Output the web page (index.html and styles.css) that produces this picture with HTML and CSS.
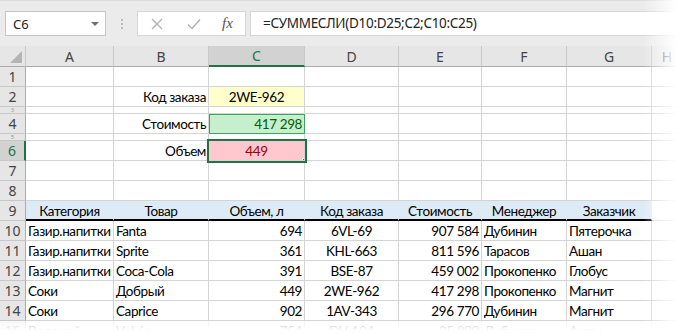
FILE: index.html
```html
<!DOCTYPE html>
<html lang="ru">
<head>
    <meta charset="UTF-8">
    <title>СУММЕСЛИ</title>
    <link rel="stylesheet" href="styles.css">
</head>
<body>

<div class="window">
    <div class="formula-bar">
        <div class="name-box">
            <span>C6</span>
            <span class="arrow"></span>
        </div>
        <div class="grip"><i></i><i></i><i></i></div>
        <div class="fx-buttons">
            <svg class="btn" width="14" height="14" viewBox="0 0 14 14"><path d="M2 2 L12 12 M12 2 L2 12" stroke="#b0b0b0" stroke-width="1.3" fill="none"/></svg>
            <svg class="btn" width="16" height="14" viewBox="0 0 16 14"><path d="M2 7.5 L6 11.5 L14 2.5" stroke="#b0b0b0" stroke-width="1.4" fill="none"/></svg>
            <span class="fx">fx</span>
        </div>
        <div class="formula">=СУММЕСЛИ(D10:D25;C2;C10:C25)</div>
    </div>

    <div class="sheet">
        <div class="row head">
            <div class="corner"><span class="tri"></span></div>
            <div class="ch">A</div>
            <div class="ch">B</div>
            <div class="ch active">C</div>
            <div class="ch">D</div>
            <div class="ch">E</div>
            <div class="ch">F</div>
            <div class="ch">G</div>
            <div class="ch">H</div>
        </div>

        <div class="row">
            <div class="rh">1</div>
            <div class="c"></div><div class="c"></div><div class="c"></div><div class="c"></div>
            <div class="c"></div><div class="c"></div><div class="c"></div><div class="c"></div>
        </div>
        <div class="row">
            <div class="rh">2</div>
            <div class="c"></div>
            <div class="c r">Код заказа</div>
            <div class="c m yellow">2WE-962</div>
            <div class="c"></div><div class="c"></div><div class="c"></div><div class="c"></div><div class="c"></div>
        </div>
        <div class="row tiny">
            <div class="rh">3</div>
            <div class="c"></div><div class="c"></div><div class="c"></div><div class="c"></div>
            <div class="c"></div><div class="c"></div><div class="c"></div><div class="c"></div>
        </div>
        <div class="row">
            <div class="rh">4</div>
            <div class="c"></div>
            <div class="c r">Стоимость</div>
            <div class="c r good">417 298</div>
            <div class="c"></div><div class="c"></div><div class="c"></div><div class="c"></div><div class="c"></div>
        </div>
        <div class="row tiny">
            <div class="rh">5</div>
            <div class="c"></div><div class="c"></div><div class="c"></div><div class="c"></div>
            <div class="c"></div><div class="c"></div><div class="c"></div><div class="c"></div>
        </div>
        <div class="row">
            <div class="rh active">6</div>
            <div class="c"></div>
            <div class="c r">Объем</div>
            <div class="c m bad selected">449<span class="handle"></span></div>
            <div class="c"></div><div class="c"></div><div class="c"></div><div class="c"></div><div class="c"></div>
        </div>
        <div class="row">
            <div class="rh">7</div>
            <div class="c"></div><div class="c"></div><div class="c"></div><div class="c"></div>
            <div class="c"></div><div class="c"></div><div class="c"></div><div class="c"></div>
        </div>
        <div class="row">
            <div class="rh">8</div>
            <div class="c"></div><div class="c"></div><div class="c"></div><div class="c"></div>
            <div class="c"></div><div class="c"></div><div class="c"></div><div class="c"></div>
        </div>
        <div class="row titles">
            <div class="rh">9</div>
            <div class="c m t">Категория</div>
            <div class="c m t">Товар</div>
            <div class="c m t">Объем, л</div>
            <div class="c m t">Код заказа</div>
            <div class="c m t">Стоимость</div>
            <div class="c m t">Менеджер</div>
            <div class="c m t">Заказчик</div>
            <div class="c"></div>
        </div>
        <div class="row">
            <div class="rh">10</div>
            <div class="c">Газир.напитки</div><div class="c">Fanta</div><div class="c r">694</div>
            <div class="c m">6VL-69</div><div class="c r">907 584</div><div class="c">Дубинин</div>
            <div class="c">Пятерочка</div><div class="c"></div>
        </div>
        <div class="row">
            <div class="rh">11</div>
            <div class="c">Газир.напитки</div><div class="c">Sprite</div><div class="c r">361</div>
            <div class="c m">KHL-663</div><div class="c r">811 596</div><div class="c">Тарасов</div>
            <div class="c">Ашан</div><div class="c"></div>
        </div>
        <div class="row">
            <div class="rh">12</div>
            <div class="c">Газир.напитки</div><div class="c">Coca-Cola</div><div class="c r">391</div>
            <div class="c m">BSE-87</div><div class="c r">459 002</div><div class="c">Прокопенко</div>
            <div class="c">Глобус</div><div class="c"></div>
        </div>
        <div class="row">
            <div class="rh">13</div>
            <div class="c">Соки</div><div class="c">Добрый</div><div class="c r">449</div>
            <div class="c m">2WE-962</div><div class="c r">417 298</div><div class="c">Прокопенко</div>
            <div class="c">Магнит</div><div class="c"></div>
        </div>
        <div class="row">
            <div class="rh">14</div>
            <div class="c">Соки</div><div class="c">Caprice</div><div class="c r">902</div>
            <div class="c m">1AV-343</div><div class="c r">296 770</div><div class="c">Дубинин</div>
            <div class="c">Магнит</div><div class="c"></div>
        </div>
        <div class="row">
            <div class="rh">15</div>
            <div class="c">Вода чай</div><div class="c">Volvic</div><div class="c r">754</div>
            <div class="c m">DV-104</div><div class="c r">25 890</div><div class="c">Дубинин</div>
            <div class="c">Ашан</div><div class="c"></div>
        </div>
    </div>

    <div class="fade-right"></div>
    <div class="fade-bottom"></div>
</div>

</body>
</html>
```

FILE: styles.css
```css
body {
    margin: 0;
    background: #fff;
    font-family: Lato, 'Liberation Sans', sans-serif;
}
.window {
    position: relative;
    width: 683px;
    height: 333px;
    overflow: hidden;
    background: #fff;
}

/* строка формул */
.formula-bar {
    display: flex;
    align-items: center;
    height: 46px;
    padding: 0 0 0 5px;
    background: #ebebeb;
    border-top: 1px solid #dcdcdc;
    box-sizing: border-box;
    font-family: 'Noto Sans', sans-serif;
    font-size: 13px;
    color: #222;
}
.name-box {
    display: flex;
    align-items: center;
    justify-content: space-between;
    width: 101px;
    height: 25px;
    padding: 0 6px 0 7px;
    box-sizing: border-box;
    background: #fff;
    border: 1px solid #c6c6c6;
}
.name-box .arrow {
    width: 0;
    height: 0;
    border-left: 4px solid transparent;
    border-right: 4px solid transparent;
    border-top: 4px solid #707070;
}
.grip {
    display: flex;
    flex-direction: column;
    gap: 2px;
    width: 31px;
    align-items: center;
}
.grip i {
    width: 2px;
    height: 2px;
    background: #b8b8b8;
}
.fx-buttons {
    display: flex;
    align-items: center;
    width: 109px;
    height: 25px;
    box-sizing: border-box;
    background: #fff;
    border: 1px solid #d6d6d6;
    padding-left: 12px;
    gap: 22px;
}
.fx {
    font-family: 'Liberation Serif', serif;
    font-style: italic;
    font-size: 15px;
    color: #555;
    margin-left: -2px;
}
.formula {
    flex: 1;
    height: 25px;
    margin-left: 4px;
    padding-left: 12px;
    box-sizing: border-box;
    background: #fff;
    border: 1px solid #d6d6d6;
    border-right: none;
    line-height: 23px;
    font-size: 13.5px;
    letter-spacing: -0.3px;
}

/* лист */
.row {
    display: grid;
    grid-template-columns: 26px 88px 95px 96px 94px 83px 85px 85px 31px;
    height: 20px;
    font-size: 13.5px;
    letter-spacing: -0.4px;
    color: #000;
}
.row.tiny {
    height: 7px;
}
.row.head {
    height: 21px;
    background: #e6e6e6;
    font-family: 'Noto Sans', sans-serif;
    font-size: 14px;
    letter-spacing: 0;
    color: #444;
}
.corner {
    position: relative;
    border-right: 1px solid #c8c8c8;
    border-bottom: 1px solid #ababab;
}
.corner .tri {
    position: absolute;
    right: 3px;
    bottom: 3px;
    width: 0;
    height: 0;
    border-left: 12px solid transparent;
    border-bottom: 12px solid #b4b4b4;
}
.ch {
    display: flex;
    align-items: center;
    justify-content: center;
    border-right: 1px solid #c8c8c8;
    border-bottom: 1px solid #ababab;
}
.ch.active {
    background: #d2d2d2;
    color: #217346;
    border-bottom: 2px solid #217346;
}
.rh {
    display: flex;
    align-items: center;
    justify-content: center;
    overflow: hidden;
    background: #e6e6e6;
    border-right: 1px solid #ababab;
    border-bottom: 1px solid #c8c8c8;
    font-family: 'Noto Sans', sans-serif;
    font-size: 14px;
    letter-spacing: 0;
    color: #444;
}
.tiny .rh {
    font-size: 6px;
    line-height: 6px;
    color: #999;
}
.rh.active {
    background: #d2d2d2;
    color: #217346;
    border-right: 2px solid #217346;
}
.c {
    display: flex;
    align-items: center;
    padding: 1px 2px 0 2px;
    overflow: hidden;
    white-space: nowrap;
    border-right: 1px solid #d4d4d4;
    border-bottom: 1px solid #d4d4d4;
}
.c.r { justify-content: flex-end; }
.c.m { justify-content: center; }

.yellow { background: #ffffcc; }
.good {
    background: #c6efce;
    color: #006100;
    outline: 1px solid #3ea35f;
    outline-offset: -1px;
}
.bad {
    background: #ffc7ce;
    color: #9c0006;
}
.selected {
    position: relative;
    outline: 2px solid #217346;
    outline-offset: 0;
    z-index: 1;
}
.handle {
    position: absolute;
    right: -5px;
    bottom: -5px;
    width: 5px;
    height: 5px;
    background: #217346;
    border: 1px solid #fff;
}
.titles .t {
    background: #ddebf7;
    border-right-color: #ddebf7;
    border-bottom: 2px solid #000;
}

/* растворение краёв скриншота */
.fade-right {
    position: absolute;
    top: 0;
    right: 0;
    width: 40px;
    height: 100%;
    background: linear-gradient(to right, rgba(255,255,255,0), #fff 85%);
}
.fade-bottom {
    position: absolute;
    left: 0;
    bottom: 0;
    width: 100%;
    height: 12px;
    background: linear-gradient(to bottom, rgba(255,255,255,0.7), #fff 80%);
}
```
